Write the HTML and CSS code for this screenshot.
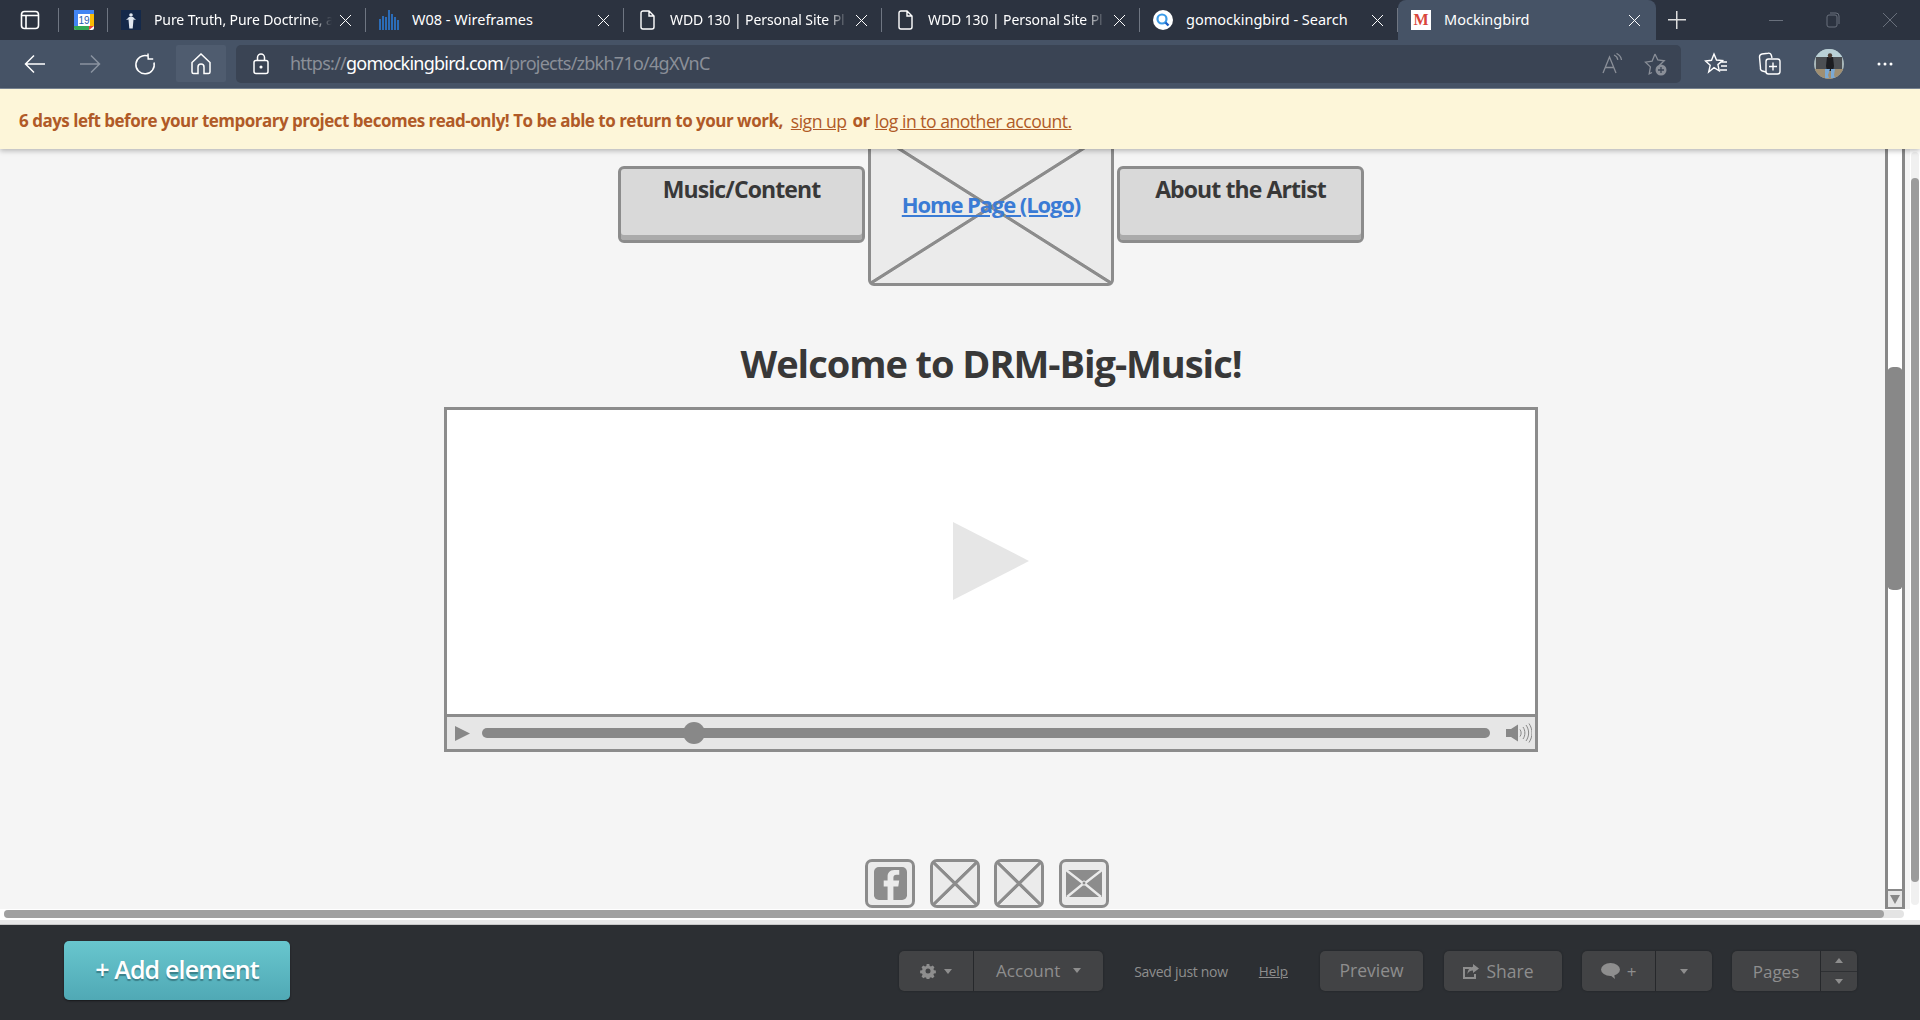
FILE: index.html
```html
<!DOCTYPE html>
<html lang="en">
<head>
	<meta charset="UTF-8">
	<title>Mockingbird</title>
	<link rel="stylesheet" href="styles.css">
</head>
<body>
<div class="app">

	<!-- browser tabs -->
	<div class="tabstrip">
		<div class="strip-start">
			<svg class="ico" width="20" height="20" viewBox="0 0 20 20" fill="none" stroke="#fff" stroke-width="1.6"><rect x="1.5" y="1.5" width="17" height="17" rx="3"/><path d="M1.5 5.5h17M6 5.5v13"/></svg>
		</div>
		<div class="strip-pin">
			<svg width="20" height="20" viewBox="0 0 20 20"><rect width="20" height="20" rx="2" fill="#fff"/><path d="M0 0h20v4H0z" fill="#4285f4"/><path d="M0 4h4v12H0z" fill="#4285f4"/><path d="M16 4h4v12h-4z" fill="#fbbc04"/><path d="M0 16h15v4H2a2 2 0 0 1-2-2z" fill="#34a853"/><path d="M15 16h5l-5 4z" fill="#ea4335"/><text x="10" y="14" class="cal-num">19</text></svg>
		</div>
		<div class="tab">
			<svg class="favicon" width="20" height="20" viewBox="0 0 20 20"><rect width="20" height="20" fill="#14294a"/><circle cx="10" cy="5" r="1.8" fill="#dfe7f0"/><path d="M8 7h4l3 3-2.5-.6-.8 9H8.300l-.8-9L5 10z" fill="#dfe7f0"/></svg>
			<span class="tab-title tab-tight">Pure Truth, Pure Doctrine, a</span>
			<span class="tab-x"></span>
		</div>
		<div class="tab">
			<svg class="favicon" width="20" height="20" viewBox="0 0 20 20" fill="#2b6cb8"><path d="M0 9h2v11H0zM3 6h2v14H3zM6 7h2v13H6zM9 0h2v20H9zM12 4h2v16h-2zM15 7h2v13h-2zM18 10h2v10h-2z"/></svg>
			<span class="tab-title">W08 - Wireframes</span>
			<span class="tab-x"></span>
		</div>
		<div class="tab">
			<svg class="favicon" width="20" height="20" viewBox="0 0 20 20" fill="none" stroke="#fff" stroke-width="1.4"><path d="M4 3a2 2 0 0 1 2-2h6l5 5v11a2 2 0 0 1-2 2H6a2 2 0 0 1-2-2zM12 1v5h5"/></svg>
			<span class="tab-title tab-tight">WDD 130 | Personal Site Pl</span>
			<span class="tab-x"></span>
		</div>
		<div class="tab">
			<svg class="favicon" width="20" height="20" viewBox="0 0 20 20" fill="none" stroke="#fff" stroke-width="1.4"><path d="M4 3a2 2 0 0 1 2-2h6l5 5v11a2 2 0 0 1-2 2H6a2 2 0 0 1-2-2zM12 1v5h5"/></svg>
			<span class="tab-title tab-tight">WDD 130 | Personal Site Pl</span>
			<span class="tab-x"></span>
		</div>
		<div class="tab">
			<svg class="favicon" width="20" height="20" viewBox="0 0 20 20"><circle cx="10" cy="10" r="10" fill="#fff"/><circle cx="9" cy="9" r="4.500" fill="none" stroke="#3c9be8" stroke-width="2.200"/><path d="M12.500 12.500l3 3" stroke="#1d5fc4" stroke-width="2.400"/></svg>
			<span class="tab-title">gomockingbird - Search</span>
			<span class="tab-x"></span>
		</div>
		<div class="tab tab-active">
			<svg class="favicon" width="20" height="20" viewBox="0 0 20 20"><rect width="20" height="20" fill="#fff"/><text x="10" y="15" class="m-num">M</text></svg>
			<span class="tab-title">Mockingbird</span>
			<span class="tab-x"></span>
		</div>
		<div class="tab-new"></div>
		<div class="win-btns">
			<svg width="14" height="14" viewBox="0 0 14 14" stroke="#69707c" fill="none"><path d="M0 7.500h14"/></svg>
			<svg width="14" height="16" viewBox="0 0 14 16" stroke="#69707c" fill="none"><rect x="1" y="3" width="10" height="12" rx="2"/><path d="M4 1h6a3 3 0 0 1 3 3v8"/></svg>
			<svg width="14" height="14" viewBox="0 0 14 14" stroke="#69707c" fill="none"><path d="M0 0l14 14M14 0L0 14"/></svg>
		</div>
	</div>

	<!-- browser toolbar -->
	<div class="toolbar">
		<div class="nav-btn">
			<svg width="22" height="20" viewBox="0 0 22 20" fill="none" stroke="#fff" stroke-width="1.500"><path d="M21 10H1.500M10 1.500L1.500 10l8.500 8.500"/></svg>
		</div>
		<div class="nav-btn">
			<svg width="22" height="20" viewBox="0 0 22 20" fill="none" stroke="#8a93a0" stroke-width="1.500"><path d="M1 10h19.500M12 1.500l8.500 8.500-8.500 8.500"/></svg>
		</div>
		<div class="nav-btn">
			<svg width="22" height="22" viewBox="0 0 22 22" fill="none" stroke="#fff" stroke-width="1.500"><path d="M13.500 2.800A9.200 9.200 0 1 0 20 9.500M14 .5l.2 5.500h5"/></svg>
		</div>
		<div class="nav-btn nav-home">
			<svg width="20" height="22" viewBox="0 0 20 22" fill="none" stroke="#fff" stroke-width="1.500"><path d="M1 9.500L10 1l9 8.500V19a1.500 1.500 0 0 1-1.500 1.500H13V14a3 3 0 0 0-6 0v6.500H2.500A1.500 1.500 0 0 1 1 19z"/></svg>
		</div>
		<div class="address">
			<svg class="lock" width="16" height="22" viewBox="0 0 16 22" fill="none" stroke="#fff" stroke-width="1.500"><rect x="1" y="7.500" width="14" height="13" rx="2"/><path d="M4.500 7.500V4.500a3.500 3.500 0 0 1 7 0v3"/><circle cx="8" cy="14" r=".8" fill="#fff"/></svg>
			<span class="url"><span class="url-dim">https://</span>gomockingbird.com<span class="url-dim">/projects/zbkh71o/4gXVnC</span></span>
			<svg class="read" width="22" height="22" viewBox="0 0 22 22" fill="none" stroke="#8a8f98" stroke-width="1.300"><path d="M1 20L7.500 4 14 20M3.500 14.500h8M12 2c2 .8 3.500 2.500 3.800 4.800M14.500 .5c2.500 1 4.500 3.500 5 6.500"/></svg>
			<svg width="24" height="24" viewBox="0 0 24 24" fill="none" stroke="#8a8f98" stroke-width="1.300"><path d="M11 2l2.800 6 6.400.8-4.700 4.400 1.200 6.300M8 20.500l-2.800 1.400 1.200-7L1.500 10.200 8.100 9.200 11 2"/><circle cx="17" cy="18" r="5.500" fill="#8a8f98" stroke="none"/><path d="M17 15v6M14 18h6" stroke="#3a4454"/></svg>
		</div>
		<div class="tool-icons">
			<svg width="24" height="24" viewBox="0 0 24 24" fill="none" stroke="#fff" stroke-width="1.400"><path d="M10 2l2.500 6 6 .6-4.600 4 1.400 6.200L10 15.700 4.700 20l1.500-6.700L1.500 9l6-.7zM17 10h6M17 14h6M16 18h7"/></svg>
			<svg class="collections" width="24" height="24" viewBox="0 0 24 24" fill="none" stroke="#fff" stroke-width="1.400"><path d="M8 20L4.500 19A2.500 2.500 0 0 1 2.500 16L1.500 5A3 3 0 0 1 4 2l6-.8a3 3 0 0 1 3.400 2.300L14 6"/><rect x="8" y="7" width="14" height="15" rx="2.500"/><path d="M15 10.500v8M11 14.500h8"/></svg>
			<svg class="avatar" width="30" height="30" viewBox="0 0 30 30"><clipPath id="avatar-clip"><circle cx="15" cy="15" r="15"/></clipPath><g clip-path="url(#avatar-clip)"><path d="M0 0h30v30H0z" fill="#a9b8ba"/><path d="M0 0h30v8H0z" fill="#b9d0d6"/><path d="M2 8h26v12H2z" fill="#4c4f53"/><path d="M0 20h30v10H0z" fill="#a08f72"/><path d="M13 8h6l1 9-1 5h-6l-1-5z" fill="#1c1d21"/><circle cx="16" cy="6.500" r="2.200" fill="#4a3a30"/><path d="M11 20h5l-2 6 1 3h-4zM17 20h4l-1 6 1 3h-4z" fill="#7ba9d4"/></g></svg>
			<svg width="16" height="4" viewBox="0 0 16 4" fill="#fff"><circle cx="2" cy="2" r="1.500"/><circle cx="8" cy="2" r="1.500"/><circle cx="14" cy="2" r="1.500"/></svg>
		</div>
	</div>

	<div class="banner">
		<b>6 days left before your temporary project becomes read-only! To be able to return to your work,</b>
		<a class="banner-link" href="#">sign up</a>
		<b>or</b>
		<a class="banner-link" href="#">log in to another account.</a>
	</div>

	<!-- wireframe canvas -->
	<div class="canvas">
		<div class="canvas-main">
			<div class="wire-page">
				<div class="wire-nav">
					<div class="wire-btn">Music/Content</div>
					<div class="wire-logo cross"><a href="#">Home Page (Logo)</a></div>
					<div class="wire-btn">About the Artist</div>
				</div>
				<h1 class="wire-title">Welcome to DRM-Big-Music!</h1>
				<div class="video">
					<div class="video-screen">
						<svg width="76" height="78" viewBox="0 0 76 78"><path d="M0 0l76 39L0 78z" fill="#e6e6e6"/></svg>
					</div>
					<div class="video-bar">
						<svg width="15" height="15" viewBox="0 0 15 15"><path d="M0 0l15 7.500L0 15z" fill="#888"/></svg>
						<div class="slider"><div class="knob"></div></div>
						<svg width="26" height="20" viewBox="0 0 26 20" fill="none" stroke="#888"><path d="M0 6h5l7-4.500v17L5 14H0z" fill="#888" stroke="none"/><path d="M14 6.500c1.500 2 1.500 5 0 7M17 4c2.500 3.500 2.500 8.500 0 12M20 2c3.500 5 3.500 11 0 16M23 .5c4 6 4 13 0 19"/></svg>
					</div>
				</div>
				<div class="social">
					<div class="social-box">
						<svg width="33" height="33" viewBox="0 0 34 34"><rect width="34" height="34" rx="5" fill="#8c8c8c"/><path d="M20 34V20h5l1-6h-6v-3c0-2 1-3 3-3h3V3h-5c-5 0-7 3-7 7v4h-4v6h4v14z" fill="#ebebeb"/></svg>
					</div>
					<div class="social-box cross"></div>
					<div class="social-box cross"></div>
					<div class="social-box">
						<svg width="36" height="27" viewBox="0 0 36 27"><path d="M0 0h36v27H0z" fill="#8c8c8c"/><path d="M0 0l18 14L36 0M1 27l17-14 17 14" fill="none" stroke="#ebebeb" stroke-width="2.500"/><circle cx="18" cy="13" r="2" fill="#8c8c8c" stroke="#ebebeb"/></svg>
					</div>
				</div>
			</div>
			<div class="wire-scroll">
				<div class="wire-scroll-track"><div class="wire-scroll-thumb"></div></div>
				<div class="wire-scroll-arrow"><svg width="10" height="9" viewBox="0 0 10 9"><path d="M0 0h10L5 9z" fill="#888"/></svg></div>
			</div>
			<div class="page-scroll"><div class="page-scroll-track"><div class="page-scroll-thumb"></div></div></div>
		</div>
		<div class="hscroll">
			<div class="hscroll-track"><div class="hscroll-thumb"></div></div>
		</div>
	</div>

	<!-- mockingbird toolbar -->
	<div class="bottombar">
		<button class="add-btn"><span>+ Add element</span></button>
		<div class="bar-right">
			<div class="group">
				<div class="seg seg-gear">
					<svg width="16" height="16" viewBox="0 0 16 16"><path d="M6.500 0h3l.4 2.200 1.500.6L13.300 1.600l2.100 2.100-1.200 1.900.6 1.500 2.200.4v3l-2.200.4-.6 1.500 1.200 1.900-2.100 2.100-1.900-1.200-1.500.6-.4 2.200h-3l-.4-2.200-1.500-.6-1.900 1.200L.6 14.300l1.200-1.900-.6-1.500L-1 10.500v-3l2.200-.4.6-1.500L.6 3.700l2.100-2.100 1.900 1.200 1.500-.6z" fill="#8e8e8e" transform="translate(1 1) scale(.875)"/><circle cx="8" cy="8" r="2.500" fill="#424345"/></svg>
					<span class="caret"></span>
				</div>
				<div class="seg seg-account">Account<span class="caret"></span></div>
			</div>
			<span class="saved">Saved just now</span>
			<a class="help" href="#">Help</a>
			<div class="group btn-preview"><div class="seg">Preview</div></div>
			<div class="group btn-share">
				<div class="seg">
					<svg width="16" height="15" viewBox="0 0 16 15" fill="#8e8e8e"><path d="M0 3h8v2H2v8h9v-3h2v5H0z"/><path d="M10 0l6 4.500L10 9V6.500C7 6.500 5.500 8 4.500 10 4.500 6 7 3 10 2.800z"/></svg>
					Share
				</div>
			</div>
			<div class="group btn-comment">
				<div class="seg seg-bubble">
					<svg width="19" height="16" viewBox="0 0 19 16"><ellipse cx="9.500" cy="6.500" rx="9.500" ry="6.500" fill="#8e8e8e"/><path d="M9 12l5 4-1-5z" fill="#8e8e8e"/></svg>
					<span>+</span>
				</div>
				<div class="seg seg-more"><span class="caret"></span></div>
			</div>
			<div class="group btn-pages">
				<div class="seg seg-pages">Pages</div>
				<div class="seg-updown">
					<div class="updown"><span class="caret caret-up"></span></div>
					<div class="updown"><span class="caret"></span></div>
				</div>
			</div>
		</div>
	</div>
</div>
</body>
</html>
```

FILE: styles.css
```css
* {
	box-sizing: border-box;
}

html, body {
	margin: 0;
	height: 100%;
	overflow: hidden;
}

body {
	font-family: "Open Sans", sans-serif;
	background: #f5f5f5;
}

.app {
	display: flex;
	flex-direction: column;
	height: 1020px;
}

/* browser tabs */
.tabstrip {
	display: flex;
	height: 40px;
	background: #2c3340;
	flex: none;
	font-family: "Noto Sans", sans-serif;
	color: #fff;
}

.strip-start, .strip-pin {
	display: flex;
	align-items: center;
	flex: none;
}

.strip-start {
	width: 59px;
	padding-left: 20px;
}

.strip-pin {
	width: 49px;
	padding-left: 15px;
}

.strip-start::after, .strip-pin::after, .tab::after {
	content: "";
	flex: none;
	width: 1px;
	height: 24px;
	background: #6f7682;
	margin-left: auto;
}

.strip-pin svg, .strip-start svg {
	flex: none;
}

.cal-num {
	font-family: "Liberation Sans", sans-serif;
	font-size: 10px;
	fill: #2a5db0;
	text-anchor: middle;
}

.m-num {
	font-family: "Liberation Serif", serif;
	font-size: 16px;
	font-weight: bold;
	fill: #d9453a;
	text-anchor: middle;
}

.tab {
	display: flex;
	align-items: center;
	flex: 0 0 258px;
	min-width: 0;
	padding-left: 13px;
}

.tab .favicon {
	flex: none;
	margin-right: 13px;
}

.tab-title {
	flex: 1;
	min-width: 0;
	padding-bottom: 2px;
	white-space: nowrap;
	overflow: hidden;
	font-size: 14.5px;
}

.tab-tight {
	font-size: 14px;
	letter-spacing: -0.1px;
	-webkit-mask-image: linear-gradient(to right, #000 88%, transparent 100%);
	mask-image: linear-gradient(to right, #000 88%, transparent 100%);
}

.tab-x {
	flex: none;
	width: 11px;
	height: 11px;
	margin: 0 14px 0 8px;
	background:
		linear-gradient(45deg, transparent 46%, #fff 46%, #fff 54%, transparent 54%),
		linear-gradient(-45deg, transparent 46%, #fff 46%, #fff 54%, transparent 54%);
}

.tab-active {
	background: #465366;
	border-radius: 8px 8px 0 0;
}

.tab-active::after {
	display: none;
}

.tab-active .tab-x {
	margin-right: 16px;
}

.tab-new {
	flex: none;
	width: 18px;
	height: 18px;
	margin: 11px 0 0 12px;
	background:
		linear-gradient(#ddd, #ddd) center / 18px 1.5px no-repeat,
		linear-gradient(#ddd, #ddd) center / 1.5px 18px no-repeat;
}

.win-btns {
	display: flex;
	align-items: center;
	gap: 43px;
	margin-left: 83px;
}

/* browser toolbar */
.toolbar {
	display: flex;
	align-items: center;
	height: 49px;
	flex: none;
	background: #465366;
	border-bottom: 1px solid #7d8896;
	padding: 0 0 1px 10px;
}

.nav-btn {
	display: flex;
	align-items: center;
	justify-content: center;
	width: 50px;
	height: 37px;
	margin-right: 5px;
}

.nav-home {
	background: #4f5c6f;
	border-radius: 2px;
	margin-right: 10px;
	margin-left: 1px;
}

.address {
	display: flex;
	align-items: center;
	width: 1445px;
	height: 38px;
	background: #3a4454;
	border-radius: 5px;
	padding: 0 13px 0 17px;
	font-family: "Noto Sans", sans-serif;
}

.lock {
	margin-right: 21px;
	flex: none;
}

.url {
	padding-bottom: 2px;
	font-size: 18px;
	letter-spacing: -0.75px;
	color: #fff;
	white-space: nowrap;
}

.url-dim {
	color: #8a8f98;
}

.read {
	margin-left: auto;
	margin-right: 20px;
}

.tool-icons {
	display: flex;
	align-items: center;
	margin-left: 23px;
	gap: 33px;
}

.tool-icons .collections {
	margin-left: -3px;
}

.tool-icons .avatar {
	margin-left: -1px;
}

/* project warning */
.banner {
	position: relative;
	z-index: 2;
	display: flex;
	align-items: center;
	height: 60px;
	flex: none;
	padding: 3px 0 0 19px;
	background: #fdf6d9;
	color: #b05a27;
	font-size: 17px;
	box-shadow: 0 2px 5px rgba(0, 0, 0, 0.25);
}

.banner b {
	font-weight: 700;
	letter-spacing: -0.5px;
	white-space: nowrap;
}

.banner-link {
	color: #b05a27;
	font-size: 17.6px;
	margin: 0 6px 0 8px;
	letter-spacing: -0.5px;
	white-space: nowrap;
}

.banner-link:last-child {
	margin: 0 0 0 5px;
}

/* canvas */
.canvas {
	flex: 1;
	display: flex;
	flex-direction: column;
	min-height: 0;
	overflow: hidden;
}

.canvas-main {
	flex: 1;
	display: flex;
	min-height: 0;
}

.wire-page {
	flex: 1;
	padding-left: 444px;
	padding-right: 347px;
}

.wire-nav {
	display: flex;
	justify-content: center;
	align-items: flex-start;
	gap: 3px;
	margin-top: -21px;
}

.wire-btn {
	width: 247px;
	height: 77px;
	margin-top: 38px;
	padding-top: 4px;
	border: 3px solid #8c8c8c;
	border-radius: 6px;
	background: #d9d9d9;
	box-shadow: inset 0 -5px 0 #ababab;
	color: #383838;
	font-size: 23px;
	font-weight: 700;
	letter-spacing: -0.9px;
	text-align: center;
}

.cross {
	background-color: #ebebeb;
	background-image:
		linear-gradient(to top right, transparent calc(50% - 2px), #8c8c8c calc(50% - 1.2px), #8c8c8c calc(50% + 1.2px), transparent calc(50% + 2px)),
		linear-gradient(to bottom right, transparent calc(50% - 2px), #8c8c8c calc(50% - 1.2px), #8c8c8c calc(50% + 1.2px), transparent calc(50% + 2px));
}

.wire-logo {
	display: flex;
	align-items: center;
	justify-content: center;
	width: 246px;
	height: 158px;
	padding-bottom: 7px;
	border: 3px solid #8c8c8c;
	border-radius: 6px;
}

.wire-logo a {
	color: #3a7bd5;
	font-size: 22px;
	font-weight: 700;
	letter-spacing: -1.1px;
}

.wire-title {
	margin: 51px 0 18px;
	height: 52px;
	color: #383838;
	font-size: 38px;
	line-height: 52px;
	font-weight: 700;
	letter-spacing: -1.05px;
	text-align: center;
}

.video {
	height: 345px;
	border: 3px solid #8c8c8c;
	display: flex;
	flex-direction: column;
}

.video-screen {
	flex: 1;
	display: flex;
	align-items: center;
	justify-content: center;
	padding-bottom: 2px;
	background: #fff;
}

.video-bar {
	display: flex;
	align-items: center;
	height: 35px;
	padding: 0 3px 0 8px;
	background: #e6e6e6;
	border-top: 3px solid #8c8c8c;
}

.slider {
	position: relative;
	flex: 1;
	height: 10px;
	margin: 0 16px 0 12px;
	background: #888;
	border-radius: 5px;
}

.knob {
	position: absolute;
	left: 201px;
	top: -6px;
	width: 22px;
	height: 22px;
	border-radius: 50%;
	background: #888;
}

.social {
	display: flex;
	justify-content: center;
	gap: 14.5px;
	margin-top: 107px;
	padding-right: 8.5px;
}

.social-box {
	display: flex;
	align-items: center;
	justify-content: center;
	width: 50px;
	height: 49px;
	background-color: #ebebeb;
	border: 3px solid #8c8c8c;
	border-radius: 7px;
}

/* scrollbars */
.wire-scroll {
	flex: none;
	width: 20px;
	margin-right: 5px;
	display: flex;
	flex-direction: column;
	border: solid #888;
	border-width: 0 3px 2px;
	background: #fff;
}

.wire-scroll-track {
	flex: 1;
	padding-top: 218px;
}

.wire-scroll-thumb {
	height: 223px;
	margin: 0 -1px 0 -1px;
	background: #888;
	border-radius: 6px;
}

.wire-scroll-arrow {
	display: flex;
	align-items: center;
	justify-content: center;
	height: 18px;
	background: #e6e6e6;
	border-top: 2px solid #888;
}

.page-scroll {
	flex: none;
	width: 10px;
	padding: 3px 1px 4px 1px;
	background: #fff;
}

.page-scroll-track {
	height: 100%;
	padding-top: 26px;
	background: #f0f0f0;
	border-radius: 4px;
}

.page-scroll-thumb {
	height: 704px;
	background: #9c9c9c;
	border-radius: 4px;
}

.hscroll {
	flex: none;
	height: 16px;
	background: #fff;
	padding-top: 1px;
	border-bottom: 1px solid #c8c8c8;
}

.hscroll-track {
	height: 8px;
	margin: 0 16px 0 4px;
	background: #e4e4e4;
	border-radius: 4px;
}

.hscroll-thumb {
	width: 1880px;
	height: 8px;
	background: #a0a0a0;
	border-radius: 4px;
}

.hscroll::after {
	content: "";
	display: block;
	height: 4px;
	margin-top: 2px;
	background: #e8e8e8;
}

/* mockingbird toolbar */
.bottombar {
	display: flex;
	align-items: center;
	justify-content: space-between;
	height: 95px;
	flex: none;
	padding: 0 63px 0 64px;
	background: #2c2f33;
}

.add-btn {
	width: 226px;
	height: 59px;
	margin-top: -4px;
	padding: 0 0 4px;
	border: 0;
	border-radius: 5px;
	background: linear-gradient(#68c6ce, #50a9b5);
	box-shadow: 0 1px 2px rgba(0, 0, 0, 0.5);
	color: #fff;
	font-family: "Open Sans", sans-serif;
	font-size: 25px;
	font-weight: 600;
	letter-spacing: -0.85px;
	text-shadow: 0 2px 1px #3a7f88;
}

.bar-right {
	display: flex;
	align-items: center;
	color: #8e8e8e;
	font-size: 17px;
	margin-top: -3px;
}

.group {
	display: flex;
	height: 40px;
	background: #424345;
	border-radius: 5px;
	box-shadow: 0 0 2px #1e2023;
}

.seg {
	display: flex;
	align-items: center;
	justify-content: center;
	gap: 7px;
	height: 100%;
	flex: 1;
	white-space: nowrap;
}

.seg-gear {
	flex: 0 0 75px;
	gap: 8px;
	border-right: 1px solid #26282b;
}

.seg-account {
	gap: 13px;
	padding-bottom: 2px;
}

.caret {
	width: 0;
	height: 0;
	border: 4px solid transparent;
	border-top: 5px solid #8e8e8e;
	border-bottom: 0;
}

.caret-up {
	border-top: 0;
	border-bottom: 5px solid #8e8e8e;
}

.group:first-child {
	width: 204px;
}

.saved {
	margin-left: 31px;
	font-size: 14px;
	letter-spacing: -0.3px;
	white-space: nowrap;
}

.help {
	margin-left: 31px;
	margin-right: 32px;
	color: #8e8e8e;
	font-size: 13.5px;
}

.btn-preview {
	width: 103px;
	font-size: 17.5px;
}

.btn-preview .seg {
	padding-bottom: 2px;
}

.btn-share {
	width: 118px;
	margin-left: 21px;
	font-size: 17.5px;
}

.btn-share .seg {
	padding-right: 9px;
}

.btn-comment {
	width: 130px;
	margin-left: 20px;
}

.seg-bubble {
	flex: 0 0 74px;
	border-right: 1px solid #26282b;
}

.btn-pages {
	width: 125px;
	margin-left: 20px;
}

.seg-pages {
	flex: 0 0 89px;
	border-right: 1px solid #26282b;
}

.seg-updown {
	flex: 1;
	display: flex;
	flex-direction: column;
}

.updown {
	flex: 1;
	display: flex;
	align-items: center;
	justify-content: center;
}

.updown:first-child {
	border-bottom: 1px solid #2e3033;
}
```
